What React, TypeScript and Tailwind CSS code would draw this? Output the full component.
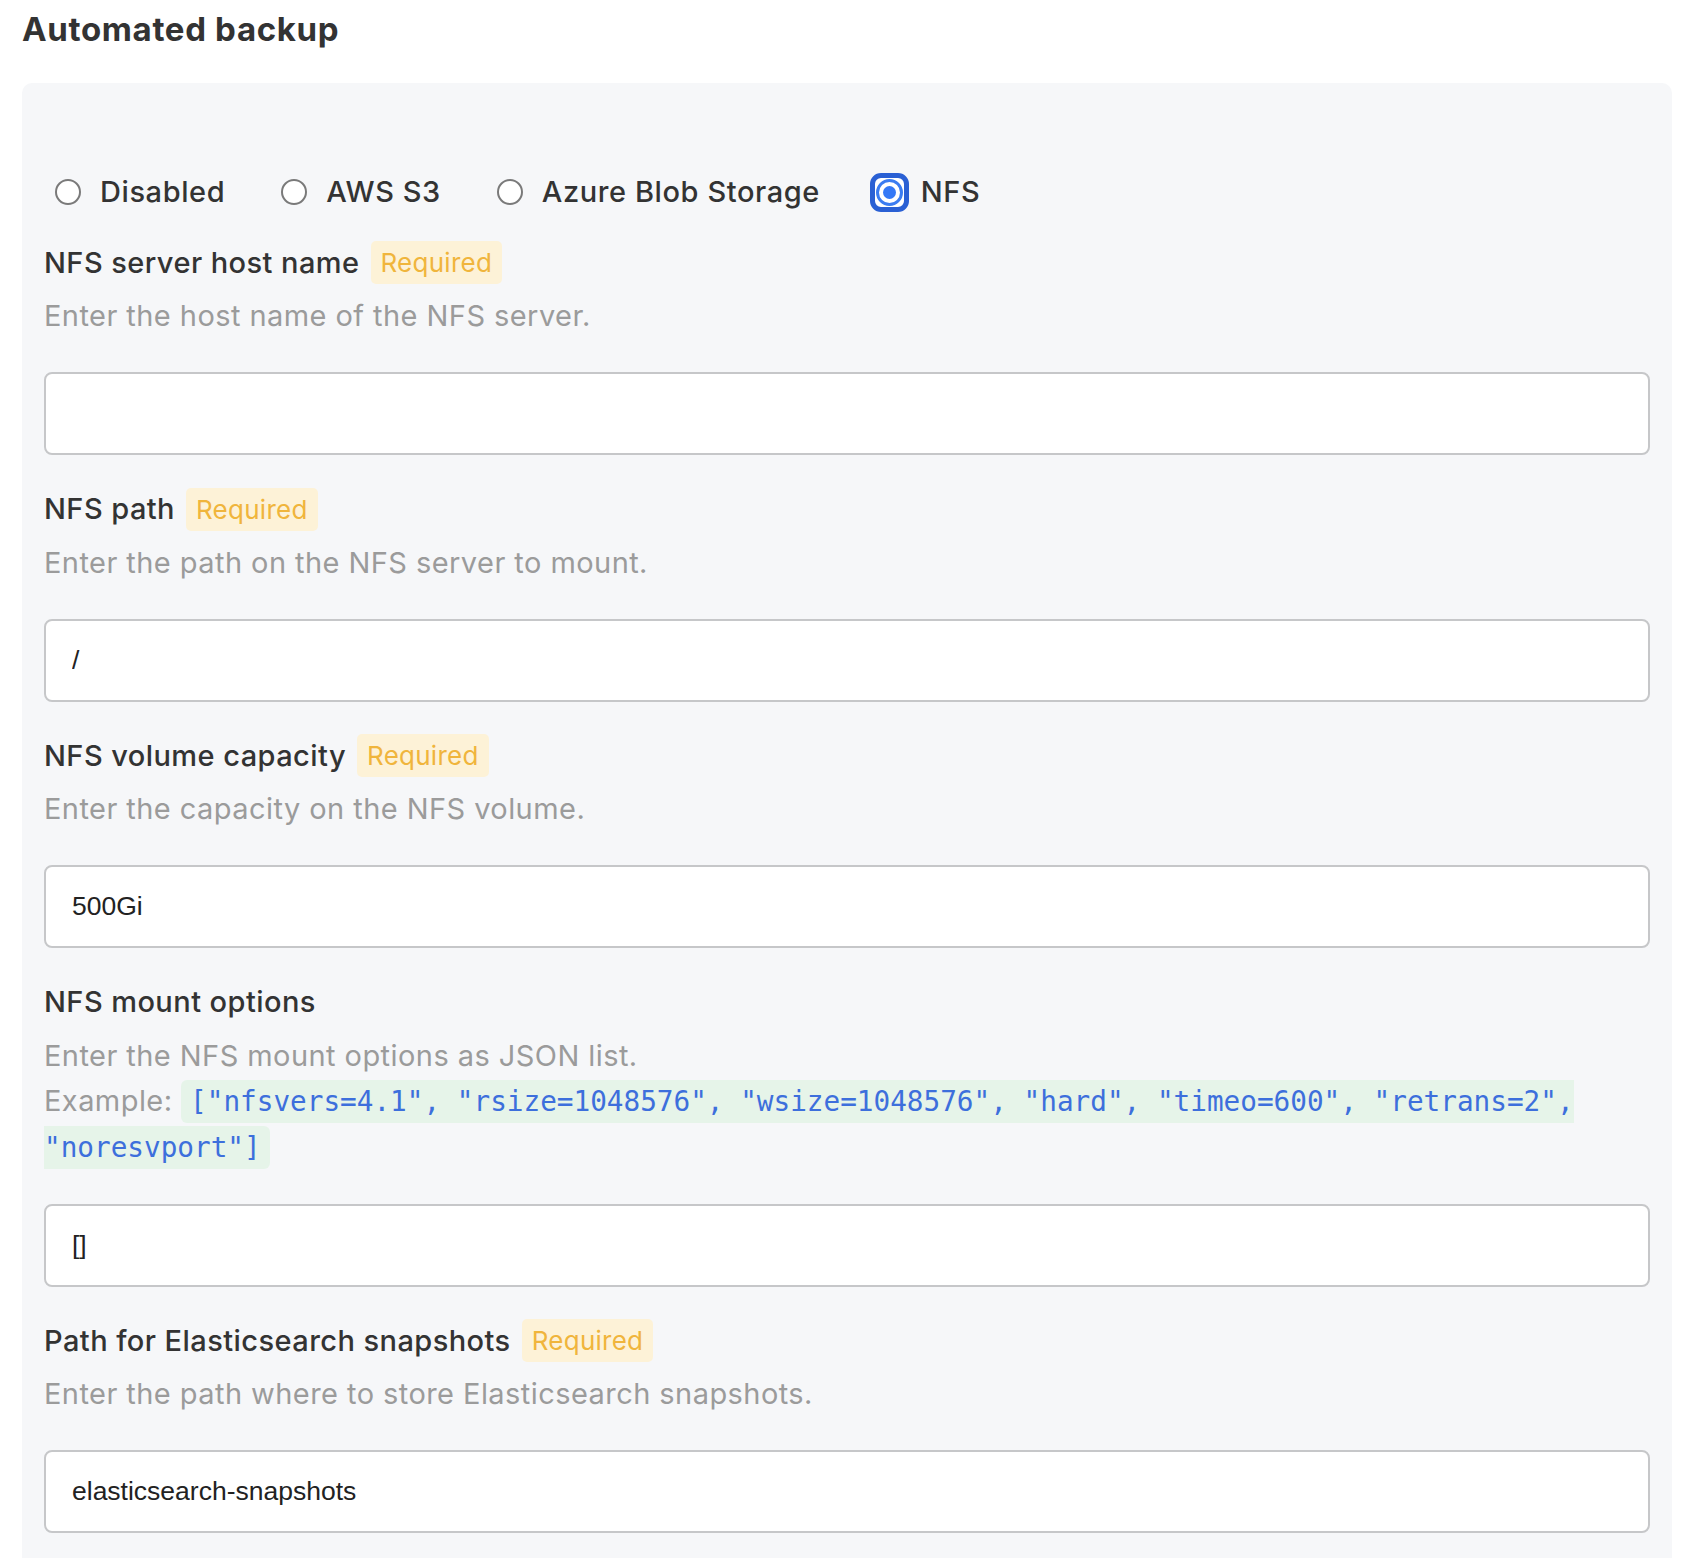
import React from "react";

type Field = {
  label: string;
  required?: boolean;
  help: React.ReactNode;
  value: string;
};

const fields: Field[] = [
  { label: "NFS server host name", required: true, help: "Enter the host name of the NFS server.", value: "" },
  { label: "NFS path", required: true, help: "Enter the path on the NFS server to mount.", value: "/" },
  { label: "NFS volume capacity", required: true, help: "Enter the capacity on the NFS volume.", value: "500Gi" },
  {
    label: "NFS mount options",
    help: (
      <>
        Enter the NFS mount options as JSON list.
        <br />
        Example:{" "}
        <code className="font-['DejaVu_Sans_Mono',monospace] text-[27.7px] tracking-normal text-[#3d6fdc] bg-[#e6f4e9] rounded-[6px] px-[9px] py-[5px]">
          ["nfsvers=4.1", "rsize=1048576", "wsize=1048576", "hard", "timeo=600", "retrans=2", "noresvport"]
        </code>
      </>
    ),
    value: "[]",
  },
  {
    label: "Path for Elasticsearch snapshots",
    required: true,
    help: "Enter the path where to store Elasticsearch snapshots.",
    value: "elasticsearch-snapshots",
  },
];

const options = ["Disabled", "AWS S3", "Azure Blob Storage", "NFS"];

function Radio({ checked }: { checked: boolean }) {
  if (!checked) {
    return <span className="w-[26px] h-[26px] shrink-0 rounded-full border-2 border-[#7a7a7a] bg-white" />;
  }
  return (
    <span className="relative w-[26px] h-[26px] shrink-0">
      {/* focus ring */}
      <span className="absolute left-[-6px] top-[-6px] w-[39px] h-[39px] rounded-[11px] border-[5px] border-[#2a60d4] bg-white flex items-center justify-center">
        <span className="w-[27px] h-[27px] rounded-full border-[3px] border-[#3b7cf1] flex items-center justify-center">
          <span className="w-[13px] h-[13px] rounded-full bg-[#3478f6]" />
        </span>
      </span>
    </span>
  );
}

export default function App() {
  return (
    <div className="min-h-screen bg-white pl-[22px] pr-[26px] pt-[9px] font-['Inter','Noto_Sans',sans-serif] text-[#333333]">
      <h1 className="text-[33px] leading-[40px] font-bold tracking-[0.02em]">Automated backup</h1>

      <div className="mt-[34px] rounded-[10px] bg-[#f6f7f9] px-[22px] pt-[87px] pb-[40px]">
        {/* BACKUP TYPE */}
        <div className="ml-[11px] h-[43px] mb-[28px] flex items-center gap-[56px]">
          {options.map((o) => (
            <label key={o} className="flex items-center gap-[19px] text-[29px] font-medium tracking-[0.02em]">
              <Radio checked={o === "NFS"} />
              <span>{o}</span>
            </label>
          ))}
        </div>

        <div className="flex flex-col gap-[32.5px]">
          {fields.map((f) => (
            <div key={f.label} className="flex flex-col">
              <div className="h-[43px] flex items-center gap-[11px]">
                <span className="text-[29px] font-medium tracking-[0.015em]">{f.label}</span>
                {f.required && (
                  <span className="h-[43px] px-[10px] flex items-center rounded-[5px] bg-[#fdf2d7] text-[#f0b53c] text-[26px] tracking-[0.01em]">
                    Required
                  </span>
                )}
              </div>
              <p className="mt-[9px] text-[29px] leading-[45px] tracking-[0.015em] text-[#9b9b9b]">{f.help}</p>
              <input
                readOnly
                value={f.value}
                className="mt-[34px] h-[83px] w-full rounded-[8px] border-2 border-[#c6c7c9] bg-white pl-[26px] font-['Liberation_Sans',Arial,sans-serif] text-[26.5px] text-[#222222] outline-none"
              />
            </div>
          ))}
        </div>
      </div>
    </div>
  );
}
